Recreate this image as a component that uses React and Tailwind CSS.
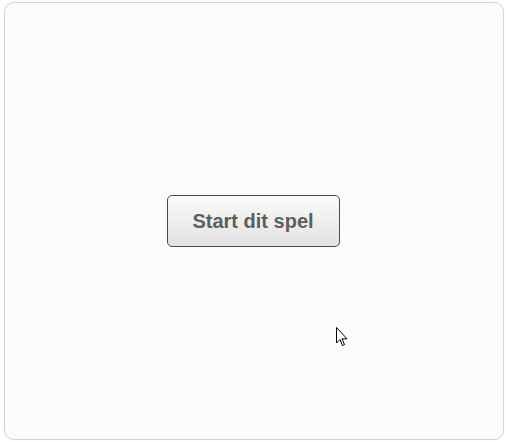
const Cursor = () => (
  <svg width="13" height="20" viewBox="0 0 13 20" className="absolute left-[336px] top-[327px]">
    <path d="M0.5 0.5 L0.5 16 L4 12.5 L6.5 18.5 L8.5 17.7 L6 11.8 L11 11.8 Z" fill="#fff" stroke="#000" strokeWidth="1" strokeLinejoin="miter" />
  </svg>
)

const App = () => {
  return (
    <div className="relative w-[506px] h-[442px] bg-white pl-[4px] pt-[2px]" style={{ fontFamily: '"Liberation Sans", Arial, sans-serif' }}>
      <div className="w-[500px] h-[438px] rounded-[10px] border border-[#d4d4d4] bg-[#fcfcfc] shadow-[0_0_2px_rgba(0,0,0,0.08)] flex items-center justify-center">
        <button className="w-[173px] h-[52px] rounded-[5px] border border-[#4a4a4a] bg-gradient-to-b from-[#fbfbfb] to-[#e2e2e2] text-[20px] font-bold text-[#5e5e5e] ml-[-2px]">
          Start dit spel
        </button>
      </div>
      <Cursor />
    </div>
  )
}

export default App
